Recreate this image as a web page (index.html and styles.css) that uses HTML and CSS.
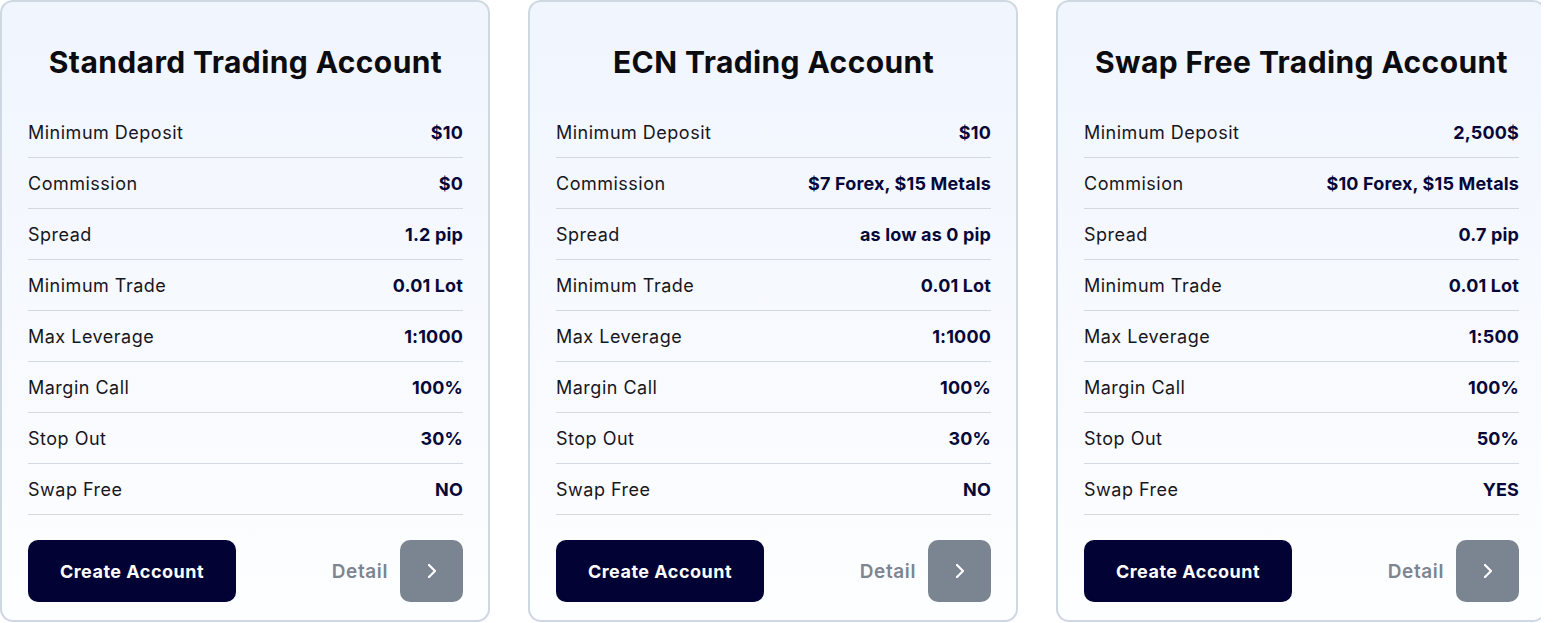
FILE: index.html
```html
<!DOCTYPE html>
<html lang="en">
<head>
<meta charset="utf-8">
<title>Trading Accounts</title>
<link rel="stylesheet" href="styles.css">
</head>
<body>
<div class="viewport">
  <div class="cards">
    <section class="card">
      <h2 class="card-title">Standard Trading Account</h2>
      <ul class="specs">
        <li class="spec"><span class="label">Minimum Deposit</span><span class="value">$10</span></li>
        <li class="spec"><span class="label">Commission</span><span class="value">$0</span></li>
        <li class="spec"><span class="label">Spread</span><span class="value">1.2 pip</span></li>
        <li class="spec"><span class="label">Minimum Trade</span><span class="value">0.01 Lot</span></li>
        <li class="spec"><span class="label">Max Leverage</span><span class="value">1:1000</span></li>
        <li class="spec"><span class="label">Margin Call</span><span class="value">100%</span></li>
        <li class="spec"><span class="label">Stop Out</span><span class="value">30%</span></li>
        <li class="spec"><span class="label">Swap Free</span><span class="value">NO</span></li>
      </ul>
      <div class="actions">
        <a class="btn-create" href="#">Create Account</a>
        <a class="detail" href="#"><span class="detail-text">Detail</span><span class="detail-arrow"><svg width="12" height="20" viewBox="0 0 12 20"><path d="M3 4 L9 10 L3 16" fill="none" stroke="#fff" stroke-width="2.2" stroke-linecap="round" stroke-linejoin="round"/></svg></span></a>
      </div>
    </section>
    <section class="card">
      <h2 class="card-title">ECN Trading Account</h2>
      <ul class="specs">
        <li class="spec"><span class="label">Minimum Deposit</span><span class="value">$10</span></li>
        <li class="spec"><span class="label">Commission</span><span class="value">$7 Forex, $15 Metals</span></li>
        <li class="spec"><span class="label">Spread</span><span class="value">as low as 0 pip</span></li>
        <li class="spec"><span class="label">Minimum Trade</span><span class="value">0.01 Lot</span></li>
        <li class="spec"><span class="label">Max Leverage</span><span class="value">1:1000</span></li>
        <li class="spec"><span class="label">Margin Call</span><span class="value">100%</span></li>
        <li class="spec"><span class="label">Stop Out</span><span class="value">30%</span></li>
        <li class="spec"><span class="label">Swap Free</span><span class="value">NO</span></li>
      </ul>
      <div class="actions">
        <a class="btn-create" href="#">Create Account</a>
        <a class="detail" href="#"><span class="detail-text">Detail</span><span class="detail-arrow"><svg width="12" height="20" viewBox="0 0 12 20"><path d="M3 4 L9 10 L3 16" fill="none" stroke="#fff" stroke-width="2.2" stroke-linecap="round" stroke-linejoin="round"/></svg></span></a>
      </div>
    </section>
    <section class="card">
      <h2 class="card-title">Swap Free Trading Account</h2>
      <ul class="specs">
        <li class="spec"><span class="label">Minimum Deposit</span><span class="value">2,500$</span></li>
        <li class="spec"><span class="label">Commision</span><span class="value">$10 Forex, $15 Metals</span></li>
        <li class="spec"><span class="label">Spread</span><span class="value">0.7 pip</span></li>
        <li class="spec"><span class="label">Minimum Trade</span><span class="value">0.01 Lot</span></li>
        <li class="spec"><span class="label">Max Leverage</span><span class="value">1:500</span></li>
        <li class="spec"><span class="label">Margin Call</span><span class="value">100%</span></li>
        <li class="spec"><span class="label">Stop Out</span><span class="value">50%</span></li>
        <li class="spec"><span class="label">Swap Free</span><span class="value">YES</span></li>
      </ul>
      <div class="actions">
        <a class="btn-create" href="#">Create Account</a>
        <a class="detail" href="#"><span class="detail-text">Detail</span><span class="detail-arrow"><svg width="12" height="20" viewBox="0 0 12 20"><path d="M3 4 L9 10 L3 16" fill="none" stroke="#fff" stroke-width="2.2" stroke-linecap="round" stroke-linejoin="round"/></svg></span></a>
      </div>
    </section>
  </div>
</div>
</body>
</html>
```

FILE: styles.css
```css
* { box-sizing: border-box; }
html, body { margin: 0; padding: 0; background: #ffffff; }
body { font-family: "Inter", "Lato", sans-serif; color: #111; }

.viewport {
  width: 1541px;
  height: 623px;
  overflow: hidden;
}

.cards {
  display: flex;
  gap: 38px;
  width: 1600px;
}

.card {
  flex: 0 0 490px;
  height: 622px;
  border: 2px solid #cfd8e2;
  border-radius: 13px;
  background: linear-gradient(180deg, #f0f5fe 0%, #f6f9fe 45%, #fdfeff 100%);
  padding: 0 25px 0 26px;
  display: flex;
  flex-direction: column;
}

.card-title {
  margin: 0;
  height: 105px;
  display: flex;
  align-items: center;
  justify-content: center;
  font-size: 30px;
  font-weight: 700;
  color: #0b0b10;
  letter-spacing: 0.4px;
  padding-top: 14px;
}

.specs {
  list-style: none;
  margin: 0;
  padding: 0;
}

.spec {
  height: 51px;
  border-bottom: 1px solid #d3d9e0;
  display: flex;
  align-items: center;
  justify-content: space-between;
  font-size: 18px;
}

.label {
  color: #16161c;
  font-weight: 400;
  letter-spacing: 0.5px;
}

.value {
  color: #07083a;
  font-weight: 700;
  letter-spacing: 0.15px;
}

.actions {
  margin-top: 25px;
  display: flex;
  justify-content: space-between;
  align-items: center;
}

.btn-create {
  width: 208px;
  height: 62px;
  border-radius: 10px;
  background: #020235;
  color: #ffffff;
  font-size: 18px;
  font-weight: 700;
  letter-spacing: 0.5px;
  text-decoration: none;
  display: flex;
  align-items: center;
  justify-content: center;
}

.detail {
  display: flex;
  align-items: center;
  gap: 12px;
  text-decoration: none;
}

.detail-text {
  color: #7c8590;
  font-size: 19px;
  font-weight: 600;
  letter-spacing: 0.6px;
}

.detail-arrow {
  width: 63px;
  height: 62px;
  border-radius: 10px;
  background: #7b8591;
  display: flex;
  align-items: center;
  justify-content: center;
}
```
